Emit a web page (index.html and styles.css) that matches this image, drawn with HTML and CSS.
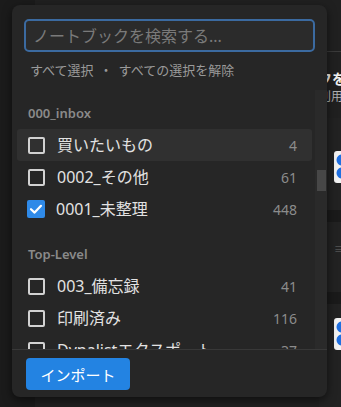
FILE: index.html
```html
<!DOCTYPE html>
<html lang="ja">
<head>
<meta charset="utf-8">
<link rel="stylesheet" href="styles.css">
</head>
<body>
<div class="page">
  <div class="nav"></div>
  <div class="content"></div>
  <div class="detail">
    <div class="detail-head"></div>
    <div class="detail-title">
      <div class="dt-main">フを</div>
      <div class="dt-sub">利用</div>
    </div>
    <div class="card card-a">
      <svg class="app-icon" width="16" height="32" viewBox="0 0 16 32"><rect x="0" y="0" width="16" height="32" rx="3" fill="#f2f2f2"/><circle cx="8" cy="9" r="5.5" fill="#1f6fe0"/><circle cx="8" cy="22" r="5.5" fill="#1f6fe0"/></svg>
    </div>
    <div class="band"></div>
    <div class="card card-b"><span class="tiny">≡</span></div>
    <div class="band"></div>
    <div class="card card-c">
      <svg class="app-icon" width="16" height="32" viewBox="0 0 16 32"><rect x="0" y="0" width="16" height="32" rx="3" fill="#f2f2f2"/><circle cx="8" cy="9" r="5.5" fill="#1f6fe0"/><circle cx="8" cy="22" r="5.5" fill="#1f6fe0"/></svg>
    </div>
  </div>
</div>

<div class="popup">
  <div class="search-wrap">
    <input class="search" type="text" placeholder="ノートブックを検索する...">
  </div>
  <div class="links"><span>すべて選択</span><span class="dot">・</span><span>すべての選択を解除</span></div>
  <div class="list-area">
    <div class="list">
      <div class="group-title">000_inbox</div>
      <div class="row hover"><span class="cb"></span><span class="label">買いたいもの</span><span class="count">4</span></div>
      <div class="row"><span class="cb"></span><span class="label">0002_その他</span><span class="count">61</span></div>
      <div class="row"><span class="cb checked"><svg width="18" height="18" viewBox="0 0 18 18"><polyline points="4,9.2 7.6,12.6 14,5.8" fill="none" stroke="#fff" stroke-width="2.2" stroke-linecap="round" stroke-linejoin="round"/></svg></span><span class="label">0001_未整理</span><span class="count">448</span></div>
      <div class="group-title second">Top-Level</div>
      <div class="row"><span class="cb"></span><span class="label">003_備忘録</span><span class="count">41</span></div>
      <div class="row"><span class="cb"></span><span class="label">印刷済み</span><span class="count">116</span></div>
      <div class="row"><span class="cb"></span><span class="label">Dynalistエクスポート</span><span class="count">37</span></div>
    </div>
    <div class="track"><div class="thumb"></div></div>
  </div>
  <div class="footer">
    <button class="import">インポート</button>
  </div>
</div>
</body>
</html>
```

FILE: styles.css
```css
* { box-sizing: border-box; }
html, body { margin: 0; padding: 0; }
body {
  width: 341px;
  height: 407px;
  overflow: hidden;
  background: #1b1b1b;
  font-family: "Noto Sans", "Noto Sans CJK JP", sans-serif;
  position: relative;
}
.page {
  display: flex;
  height: 407px;
}
.nav { width: 35px; flex: none; background: #1b1b1b; }
.content { width: 270px; flex: none; background: #202020; }
.detail {
  width: 36px;
  flex: none;
  background: #202020;
  padding-left: 14px;
  display: flex;
  flex-direction: column;
}
.detail-head {
  height: 52px;
  border-bottom: 1px solid #3a3a3a;
  flex: none;
}
.detail-title {
  padding-top: 17px;
  height: 66px;
  flex: none;
}
.dt-main {
  font-family: "Noto Sans CJK JP", sans-serif;
  font-size: 14px;
  font-weight: 700;
  line-height: 18px;
  color: #f0f0f0;
  margin-left: -1px;
  white-space: nowrap;
}
.dt-sub {
  font-family: "Noto Sans CJK JP", sans-serif;
  font-size: 12px;
  line-height: 17px;
  color: #b0b0b0;
  margin-left: 0;
  white-space: nowrap;
}
.card {
  background: #222;
  padding-left: 15px;
  flex: none;
}
.card-a { height: 92px; padding-top: 33px; }
.band { height: 12px; background: #1a1a1a; flex: none; }
.card-b { height: 70px; padding-top: 14px; }
.card-c { height: 110px; padding-top: 14px; }
.tiny { color: #555; font-size: 10px; }
.app-icon { display: block; }

.popup {
  position: absolute;
  left: 12px;
  top: 5px;
  width: 315px;
  height: 392px;
  background: #262626;
  border-radius: 8px;
  box-shadow: 0 3px 10px rgba(0,0,0,0.55);
  display: flex;
  flex-direction: column;
  overflow: hidden;
}
.search-wrap {
  padding: 14px 12px 0 12px;
  height: 47px;
  flex: none;
}
.search {
  display: block;
  width: 100%;
  height: 33px;
  background: #2b2b2b;
  border: 2px solid #3b6aa0;
  border-radius: 5px;
  outline: none;
  padding: 0 7px;
  font-family: "Noto Sans", "Noto Sans CJK JP", sans-serif;
  font-size: 16px;
  color: #ddd;
}
.search::placeholder { color: #7a7a7a; }
.links {
  height: 38px;
  flex: none;
  padding: 9px 0 0 18px;
  font-family: "Noto Sans CJK JP", sans-serif;
  font-size: 13px;
  line-height: 18px;
  color: #9a9a9a;
  display: flex;
}
.links .dot { padding: 0 6px; }
.list-area {
  height: 259px;
  flex: none;
  display: flex;
  overflow: hidden;
}
.list {
  flex: 1;
  padding: 7px 3px 0 5px;
}
.group-title {
  height: 32px;
  line-height: 32px;
  padding-left: 11px;
  font-size: 13px;
  font-weight: 600;
  color: #8a8a8a;
}
.group-title.second { margin-top: 13px; }
.row {
  height: 32px;
  display: flex;
  align-items: center;
  padding: 0 15px 0 11px;
  border-radius: 3px;
}
.row.hover { background: #303030; }
.cb {
  width: 17px;
  height: 17px;
  border: 2px solid #d2d2d2;
  border-radius: 2px;
  flex: none;
}
.cb.checked {
  width: 18px;
  height: 18px;
  border: none;
  background: #2f8ae8;
  margin-left: -1px;
  margin-right: -1px;
}
.cb.checked svg { display: block; }
.label {
  margin-left: 12px;
  flex: 1;
  font-size: 16px;
  line-height: 20px;
  color: #e2e2e2;
  white-space: nowrap;
}
.count {
  font-size: 14px;
  color: #8c8c8c;
}
.track {
  width: 12px;
  flex: none;
  background: #2a2a2a;
  padding: 80px 1px 0 2px;
}
.thumb {
  height: 21px;
  background: #474747;
}
.footer {
  flex: none;
  height: 48px;
  border-top: 1px solid #383838;
  padding: 8px 14px 0 14px;
}
.import {
  display: block;
  width: 104px;
  height: 32px;
  border: none;
  border-radius: 4px;
  background: #2383e2;
  color: #fff;
  font-family: "Noto Sans CJK JP", sans-serif;
  font-size: 15px;
  padding: 0;
}
```
